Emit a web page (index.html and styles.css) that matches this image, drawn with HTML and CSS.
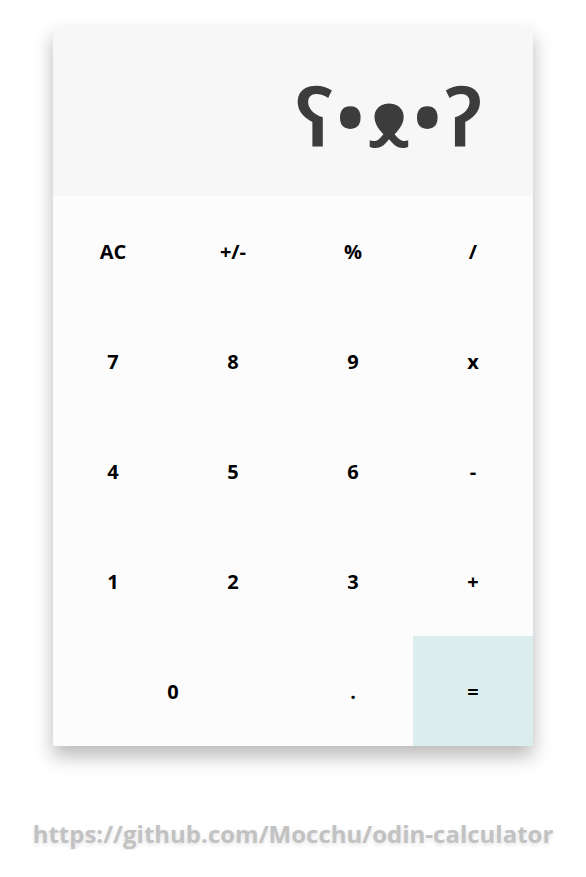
FILE: index.html
```html
<!DOCTYPE html>
<html>
<head>
<meta charset="utf-8">
<link rel="stylesheet" href="styles.css">
</head>
<body>
<div class="calc">
  <div class="display">ʕ•ᴥ•ʔ</div>
  <div class="keys">
    <div class="key">AC</div>
    <div class="key">+/-</div>
    <div class="key">%</div>
    <div class="key">/</div>
    <div class="key">7</div>
    <div class="key">8</div>
    <div class="key">9</div>
    <div class="key">x</div>
    <div class="key">4</div>
    <div class="key">5</div>
    <div class="key">6</div>
    <div class="key">-</div>
    <div class="key">1</div>
    <div class="key">2</div>
    <div class="key">3</div>
    <div class="key">+</div>
    <div class="key wide">0</div>
    <div class="key">.</div>
    <div class="key equals">=</div>
  </div>
</div>
<div class="link">https://github.com/Mocchu/odin-calculator</div>
</body>
</html>
```
FILE: styles.css
```css
html, body {
  margin: 0;
  padding: 0;
  background: #ffffff;
  font-family: "Open Sans", "DejaVu Sans", sans-serif;
}
.calc {
  width: 480px;
  margin: 27px auto 0 53px;
  box-shadow: 0 10px 18px rgba(0, 0, 0, 0.28);
}
.display {
  height: 169px;
  background: #f7f7f7;
  color: #3c3c3c;
  font-family: "Noto Sans", "Open Sans", sans-serif;
  font-weight: 600;
  font-size: 80px;
  letter-spacing: 3px;
  display: flex;
  align-items: center;
  justify-content: flex-end;
  padding: 7px 48px 0 0;
  box-sizing: border-box;
}
.keys {
  display: grid;
  grid-template-columns: repeat(4, 120px);
  grid-auto-rows: 110px;
  background: #fcfcfc;
}
.key {
  display: flex;
  align-items: center;
  justify-content: center;
  font-weight: 700;
  font-size: 20px;
  color: #000;
}
.wide {
  grid-column: span 2;
}
.equals {
  background: #dcedee;
}
.link {
  text-align: center;
  margin-top: 71px;
  font-weight: 700;
  font-size: 24px;
  color: #c2c2c2;
  text-shadow: 0 2px 4px rgba(0, 0, 0, 0.12);
}
```
